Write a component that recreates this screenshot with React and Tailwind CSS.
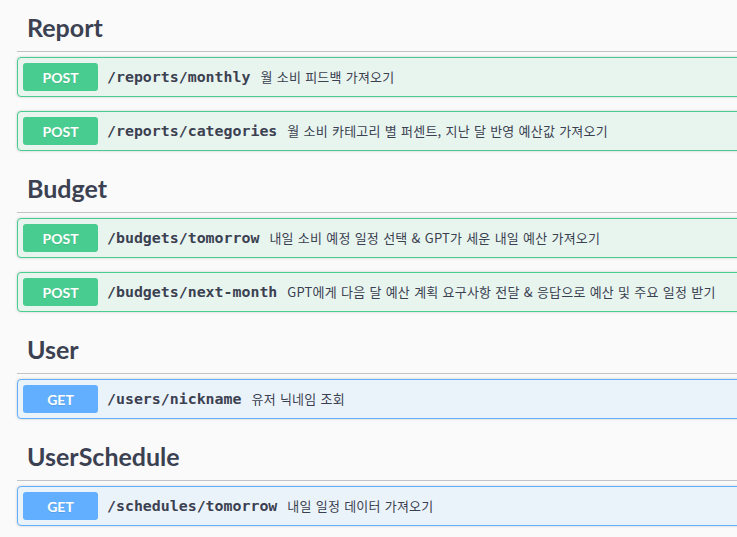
import React from 'react';

const sections = [
  {
    name: 'Report',
    ops: [
      { method: 'POST', path: '/reports/monthly', desc: '월 소비 피드백 가져오기' },
      { method: 'POST', path: '/reports/categories', desc: '월 소비 카테고리 별 퍼센트, 지난 달 반영 예산값 가져오기' },
    ],
  },
  {
    name: 'Budget',
    ops: [
      { method: 'POST', path: '/budgets/tomorrow', desc: '내일 소비 예정 일정 선택 & GPT가 세운 내일 예산 가져오기' },
      { method: 'POST', path: '/budgets/next-month', desc: 'GPT에게 다음 달 예산 계획 요구사항 전달 & 응답으로 예산 및 주요 일정 받기' },
    ],
  },
  {
    name: 'User',
    ops: [{ method: 'GET', path: '/users/nickname', desc: '유저 닉네임 조회' }],
  },
  {
    name: 'UserSchedule',
    ops: [{ method: 'GET', path: '/schedules/tomorrow', desc: '내일 일정 데이터 가져오기' }],
  },
];

const styles = {
  POST: {
    block: 'border-[#49cc90] bg-[#e8f5ef]',
    badge: 'bg-[#49cc90]',
  },
  GET: {
    block: 'border-[#61affe] bg-[#ebf3fa]',
    badge: 'bg-[#61affe]',
  },
};

const Operation = ({ method, path, desc }) => {
  const s = styles[method];
  return (
    <div
      className={`flex items-center h-[40px] mb-[14px] px-[5px] border rounded-[4px] shadow-[0_0_3px_rgba(0,0,0,0.19)] ${s.block}`}
    >
      <span
        className={`flex items-center justify-center shrink-0 w-[75px] h-[28px] rounded-[3px] text-white text-[14px] font-bold font-['Lato',sans-serif] [text-shadow:0_1px_0_rgba(0,0,0,0.1)] ${s.badge}`}
      >
        {method}
      </span>
      <span className="pl-[9px] pr-[10px] text-[14.9px] font-bold text-[#3b4151] font-['DejaVu_Sans_Mono',monospace] whitespace-nowrap">
        {path}
      </span>
      <span className="text-[13px] tracking-[0.2px] [word-spacing:1px] text-[#3b4151] font-['Noto_Sans_CJK_KR',sans-serif] whitespace-nowrap">
        {desc}
      </span>
    </div>
  );
};

export default function App() {
  return (
    <div className="w-[737px] h-[537px] overflow-hidden bg-[#fafafa] pt-[4px]">
      <div className="ml-[17px] w-[780px]">
        {sections.map((sec) => (
          <div key={sec.name}>
            <h3 className="flex items-center h-[48px] mb-[5px] pl-[10px] border-b border-[#c1c3c7] text-[25px] font-bold text-[#3b4151] font-['Lato',sans-serif]">
              {sec.name}
            </h3>
            {sec.ops.map((op) => (
              <Operation key={op.path} {...op} />
            ))}
          </div>
        ))}
      </div>
    </div>
  );
}
